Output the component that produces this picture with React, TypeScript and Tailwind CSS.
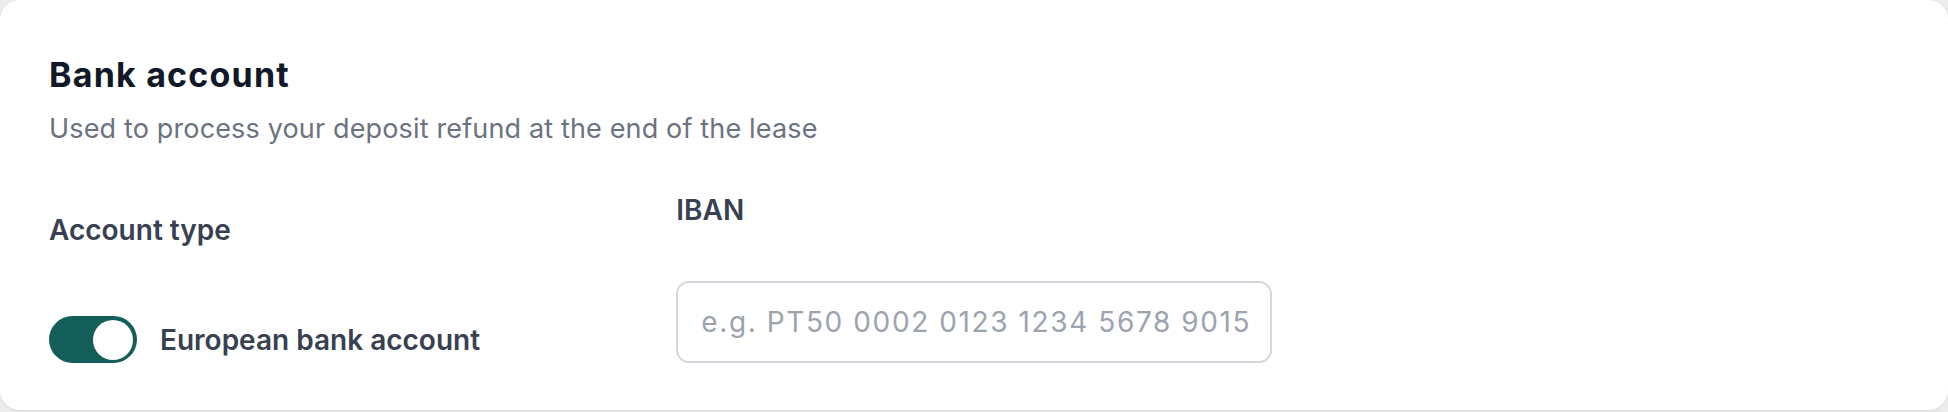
import { useState } from 'react';

const font = { fontFamily: 'Inter, "Noto Sans", sans-serif' };

const Toggle = ({ on, onChange }: { on: boolean; onChange: () => void }) => (
  <button
    type="button"
    onClick={onChange}
    className={`flex h-[47px] w-[88px] shrink-0 items-center rounded-full px-[4px] ${on ? 'justify-end bg-[#135e58]' : 'justify-start bg-[#d1d5db]'}`}
  >
    <span className="block h-[40px] w-[40px] rounded-full bg-white" />
  </button>
);

const App = () => {
  const [european, setEuropean] = useState(true);

  return (
    <div className="min-h-screen bg-[#ececec]" style={font}>
      <div className="h-[410px] rounded-[20px] bg-white px-[49px] pt-[55px] shadow-[0_1px_2px_rgba(0,0,0,0.08)]">
        {/* Header */}
        <h2 className="text-[34px] font-bold leading-[40px] tracking-[1.2px] text-[#111827]">Bank account</h2>
        <p className="mt-[18px] text-[27px] leading-[32px] tracking-[0.15px] text-[#6b7280]">
          Used to process your deposit refund at the end of the lease
        </p>

        {/* Fields */}
        <div className="mt-[48px] grid grid-cols-3 items-end gap-8">
          <div>
            <label className="block text-[28px] font-semibold leading-[34px] text-[#374151]">Account type</label>
            <div className="mt-[69px] flex items-center gap-[23px]">
              <Toggle on={european} onChange={() => setEuropean(!european)} />
              <span className="text-[28px] font-semibold leading-[34px] text-[#374151]">European bank account</span>
            </div>
          </div>

          <div>
            <label className="block text-[28px] font-semibold leading-[34px] text-[#374151]">IBAN</label>
            <input
              type="text"
              placeholder="e.g. PT50 0002 0123 1234 5678 9015 4"
              className="mt-[54px] h-[82px] w-full rounded-[13px] border-2 border-[#d4d7dd] bg-white pl-[23px] pr-[18px] text-[28px] tracking-[1.6px] text-[#111827] outline-none placeholder:text-[#9ca3af]"
            />
          </div>
        </div>
      </div>
    </div>
  );
};

export default App;
